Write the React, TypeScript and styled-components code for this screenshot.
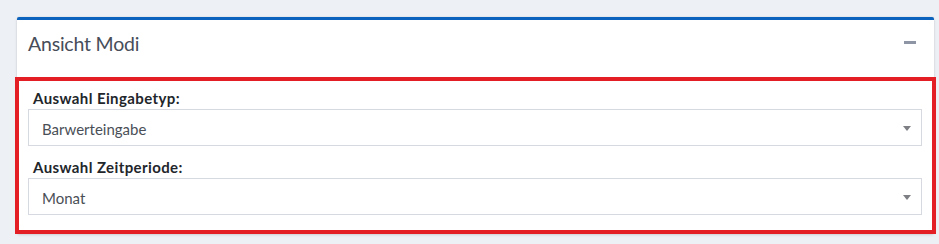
import React from 'react';
import styled, { createGlobalStyle } from 'styled-components';

const GlobalStyle = createGlobalStyle`
  html, body {
    margin: 0;
    padding: 0;
    background: #edf0f5;
  }
  * {
    box-sizing: border-box;
  }
`;

const Page = styled.div`
  height: 244px;
  padding: 17px 5px 0 17px;
  font-family: Lato, "Liberation Sans", sans-serif;
`;

const Card = styled.section`
  background: #fff;
  border-top: 3px solid #0b63bd;
  border-radius: 2px;
  box-shadow: 0 0 1px rgba(0, 0, 0, 0.2), 0 1px 3px rgba(0, 0, 0, 0.12);
`;

const Header = styled.header`
  height: 57px;
  display: flex;
  align-items: flex-start;
  justify-content: space-between;
  padding: 12px 18px 0 11px;
`;

const Title = styled.h3`
  margin: 0;
  font-size: 19.5px;
  line-height: 24px;
  font-weight: 400;
  letter-spacing: -0.2px;
  color: #474d59;
`;

const CollapseButton = styled.button`
  margin-top: 9px;
  padding: 0;
  border: 0;
  background: none;
  width: 12px;
  height: 3px;
  cursor: pointer;

  &::before {
    content: '';
    display: block;
    width: 12px;
    height: 3px;
    background: #8e95a5;
  }
`;

const Body = styled.div`
  margin: 0 -2px;
  border: 4px solid #e31e25;
  padding: 7px 10px 15px 9px;
`;

const Field = styled.div<{ $first?: boolean }>`
  margin-top: ${(p) => (p.$first ? 0 : 11)}px;
`;

const Label = styled.label`
  display: block;
  padding-left: 5px;
  margin-bottom: 1px;
  font-size: 15px;
  line-height: 20px;
  font-weight: 700;
  letter-spacing: 0.4px;
  color: #22262b;
`;

const Select = styled.div`
  height: 37px;
  display: flex;
  align-items: center;
  justify-content: space-between;
  padding: 3px 10px 0 13px;
  border: 1px solid #d6d9df;
  background: #fff;
  font-size: 15px;
  color: #4a4f57;
  cursor: pointer;
`;

const Caret = styled.span`
  width: 0;
  height: 0;
  margin-top: -2px;
  border-left: 4.5px solid transparent;
  border-right: 4.5px solid transparent;
  border-top: 5px solid #7d7f84;
`;

const fields = [
  { label: 'Auswahl Eingabetyp:', value: 'Barwerteingabe' },
  { label: 'Auswahl Zeitperiode:', value: 'Monat' },
];

export default function App() {
  return (
    <Page>
      <GlobalStyle />
      <Card>
        <Header>
          <Title>Ansicht Modi</Title>
          <CollapseButton aria-label="Einklappen" />
        </Header>
        <Body>
          {fields.map((f, i) => (
            <Field key={f.label} $first={i === 0}>
              <Label>{f.label}</Label>
              <Select>
                <span>{f.value}</span>
                <Caret />
              </Select>
            </Field>
          ))}
        </Body>
      </Card>
    </Page>
  );
}
